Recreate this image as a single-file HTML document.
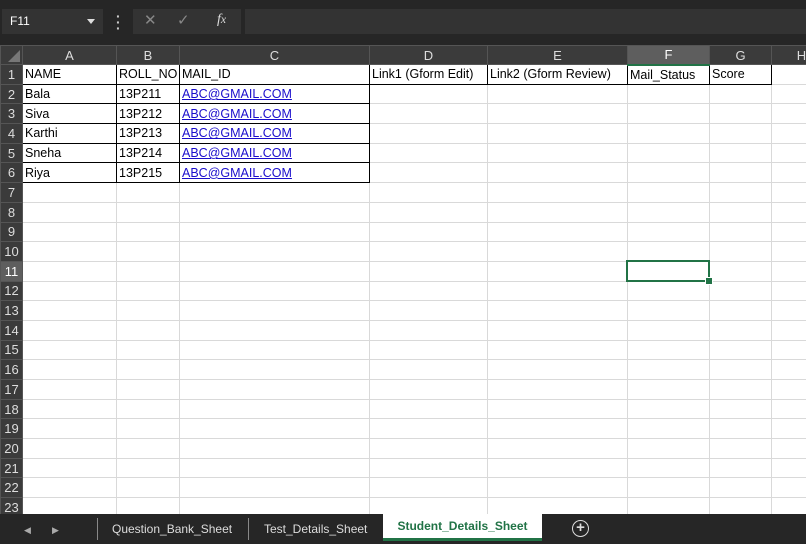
<!DOCTYPE html>
<html><head><meta charset="utf-8"><style>
*{margin:0;padding:0;box-sizing:border-box}
body{width:806px;height:544px;overflow:hidden;background:#262626;font-family:"Liberation Sans",sans-serif;position:relative}
.top{position:absolute;left:0;top:0;width:806px;height:45px;background:#262626}
.nb{position:absolute;left:2px;top:9px;width:101px;height:25px;background:#333;color:#fff;font-size:12px;line-height:25px;padding-left:8px}
.nb:after{content:"";position:absolute;right:8px;top:10px;border:4px solid transparent;border-top:5px solid #ddd}
.dots{position:absolute;left:116px;top:13px;color:#ccc;font-size:14px;font-weight:bold;line-height:6px;width:4px}
.fbtn{position:absolute;left:133px;top:9px;width:108px;height:25px;background:#333;color:#888;font-size:15px}
.fbar{position:absolute;left:245px;top:9px;width:561px;height:25px;background:#333}
.grid{position:absolute;left:0;top:45px;width:806px;height:469px;overflow:hidden;background:#fff}
table{border-collapse:collapse;table-layout:fixed;font-size:12.5px;width:831px}
td{height:19.7px;border:1px solid #d9d9d9;padding:0 2px;white-space:nowrap;overflow:hidden;color:#000}
tr.h td{background:#3b3b3b;color:#ddd;text-align:center;border-color:#555;height:19px;font-size:13px}
td.r{background:#3b3b3b;color:#ddd;text-align:center;border-color:#555;padding:0;font-size:13px}
td.b{border:1px solid #000}
a{color:#1a0dcc;text-decoration:underline}
.sel{position:absolute;left:626px;top:260px;width:84px;height:22px;border:2px solid #217346}
.sel:after{content:"";position:absolute;right:-5px;bottom:-5px;width:6px;height:6px;background:#217346;border:1px solid #fff}
.tabs{position:absolute;left:0;top:514px;width:806px;height:30px;background:#262626;color:#ddd;font-size:12px}
.tab{position:absolute;top:5px;line-height:20px}
</style></head><body>
<div class="top">
<div class="nb">F11</div>
<div class="dots">·<br>·<br>·</div>
<div class="fbtn"><span style="position:absolute;left:11px;top:2px">✕</span><span style="position:absolute;left:44px;top:2px">✓</span><span style="position:absolute;left:84px;top:3px;color:#ddd;font-style:italic;font-family:'Liberation Serif',serif;font-size:14px">f<small>x</small></span></div>
<div class="fbar"></div>
</div>
<div class="grid">
<table>
<colgroup><col style="width:22px"><col style="width:94px"><col style="width:63px"><col style="width:190px"><col style="width:118px"><col style="width:140px"><col style="width:82px"><col style="width:62px"><col style="width:60px"></colgroup>
<tr class="h"><td style="position:relative"><span style="position:absolute;right:2px;bottom:2px;border-left:12px solid transparent;border-bottom:12px solid #777"></span></td><td>A</td><td>B</td><td>C</td><td>D</td><td>E</td><td style="background:#5e5e5e;border-bottom:2px solid #217346;color:#fff">F</td><td>G</td><td>H</td></tr>
<tr><td class="r">1</td><td class="b">NAME</td><td class="b">ROLL_NO</td><td class="b">MAIL_ID</td><td class="b">Link1 (Gform Edit)</td><td class="b">Link2 (Gform Review)</td><td class="b">Mail_Status</td><td class="b">Score</td><td></td></tr>
<tr><td class="r">2</td><td class="b">Bala</td><td class="b">13P211</td><td class="b"><a>ABC@GMAIL.COM</a></td><td></td><td></td><td></td><td></td><td></td></tr>
<tr><td class="r">3</td><td class="b">Siva</td><td class="b">13P212</td><td class="b"><a>ABC@GMAIL.COM</a></td><td></td><td></td><td></td><td></td><td></td></tr>
<tr><td class="r">4</td><td class="b">Karthi</td><td class="b">13P213</td><td class="b"><a>ABC@GMAIL.COM</a></td><td></td><td></td><td></td><td></td><td></td></tr>
<tr><td class="r">5</td><td class="b">Sneha</td><td class="b">13P214</td><td class="b"><a>ABC@GMAIL.COM</a></td><td></td><td></td><td></td><td></td><td></td></tr>
<tr><td class="r">6</td><td class="b">Riya</td><td class="b">13P215</td><td class="b"><a>ABC@GMAIL.COM</a></td><td></td><td></td><td></td><td></td><td></td></tr>
<tr><td class="r">7</td><td></td><td></td><td></td><td></td><td></td><td></td><td></td><td></td></tr>
<tr><td class="r">8</td><td></td><td></td><td></td><td></td><td></td><td></td><td></td><td></td></tr>
<tr><td class="r">9</td><td></td><td></td><td></td><td></td><td></td><td></td><td></td><td></td></tr>
<tr><td class="r">10</td><td></td><td></td><td></td><td></td><td></td><td></td><td></td><td></td></tr>
<tr><td class="r" style="background:#5e5e5e;color:#fff">11</td><td></td><td></td><td></td><td></td><td></td><td></td><td></td><td></td></tr>
<tr><td class="r">12</td><td></td><td></td><td></td><td></td><td></td><td></td><td></td><td></td></tr>
<tr><td class="r">13</td><td></td><td></td><td></td><td></td><td></td><td></td><td></td><td></td></tr>
<tr><td class="r">14</td><td></td><td></td><td></td><td></td><td></td><td></td><td></td><td></td></tr>
<tr><td class="r">15</td><td></td><td></td><td></td><td></td><td></td><td></td><td></td><td></td></tr>
<tr><td class="r">16</td><td></td><td></td><td></td><td></td><td></td><td></td><td></td><td></td></tr>
<tr><td class="r">17</td><td></td><td></td><td></td><td></td><td></td><td></td><td></td><td></td></tr>
<tr><td class="r">18</td><td></td><td></td><td></td><td></td><td></td><td></td><td></td><td></td></tr>
<tr><td class="r">19</td><td></td><td></td><td></td><td></td><td></td><td></td><td></td><td></td></tr>
<tr><td class="r">20</td><td></td><td></td><td></td><td></td><td></td><td></td><td></td><td></td></tr>
<tr><td class="r">21</td><td></td><td></td><td></td><td></td><td></td><td></td><td></td><td></td></tr>
<tr><td class="r">22</td><td></td><td></td><td></td><td></td><td></td><td></td><td></td><td></td></tr>
<tr><td class="r">23</td><td></td><td></td><td></td><td></td><td></td><td></td><td></td><td></td></tr>
</table>
</div>
<div class="sel"></div>
<div class="tabs">
<span class="tab" style="left:24px;color:#aaa;font-size:9px;top:6px">◀</span>
<span class="tab" style="left:52px;color:#aaa;font-size:9px;top:6px">▶</span>
<span style="position:absolute;left:97px;top:4px;width:1px;height:22px;background:#888"></span>
<span class="tab" style="left:112px">Question_Bank_Sheet</span>
<span style="position:absolute;left:248px;top:4px;width:1px;height:22px;background:#888"></span>
<span class="tab" style="left:264px">Test_Details_Sheet</span>
<div style="position:absolute;left:383px;top:0;width:159px;height:27px;background:#fff;border-bottom:3px solid #217346;color:#217346;font-weight:bold;text-align:center;line-height:24px">Student_Details_Sheet</div>
<span style="position:absolute;left:572px;top:6px;width:17px;height:17px;border:1.5px solid #ddd;border-radius:50%;text-align:center;line-height:14px;font-size:15px;font-weight:bold">+</span>
</div>
</body></html>
